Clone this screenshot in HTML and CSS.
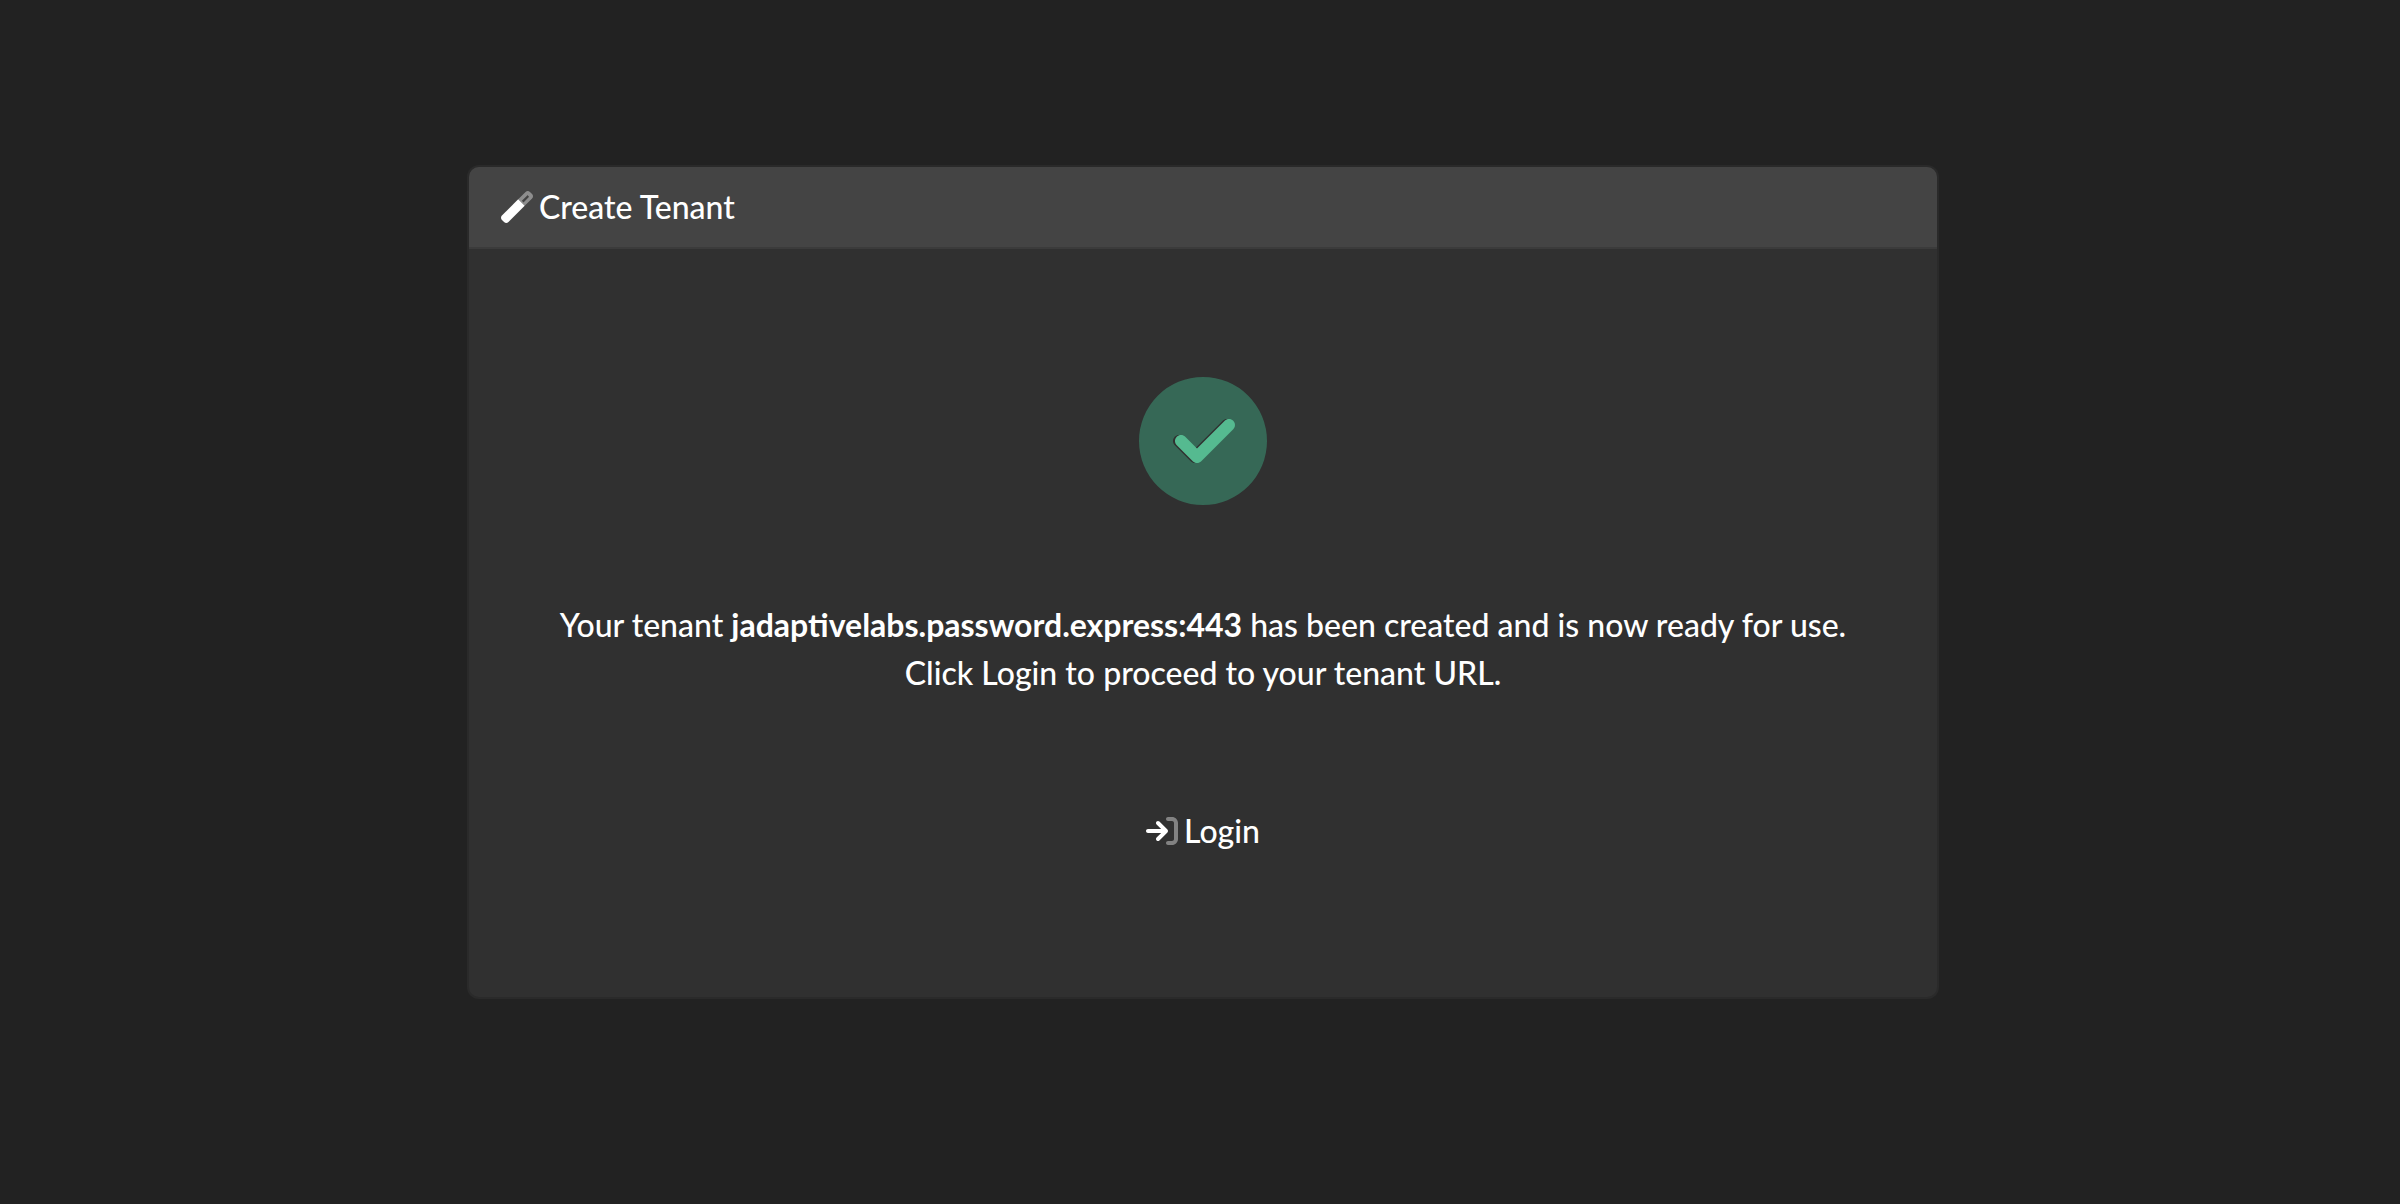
FILE: index.html
```html
<!DOCTYPE html>
<html lang="en">
  <head>
    <meta charset="UTF-8" />
    <meta name="viewport" content="width=device-width, initial-scale=1.0" />
    <title>Create Tenant</title>
    <link rel="stylesheet" href="styles.css">
  </head>
  <body>
    <main class="container">
      <div class="card">
        <div class="card-header">
          <svg class="icon" viewBox="0 0 512 512" aria-hidden="true">
            <path class="icon-secondary" fill-rule="evenodd" d="M275 133L393 15c20-20 50-20 70 0l34 34c20 20 20 50 0 70L379 237zM334 156l26 26 82-82c6-6 6-12 0-18l-8-8c-6-6-12-6-18 0z" />
            <path d="M275 133L15 393c-20 20-20 50 0 70l34 34c20 20 50 20 70 0l260-260z" />
          </svg>
          <span>Create Tenant</span>
        </div>
        <div class="card-body">
          <svg class="icon-success" viewBox="0 0 512 512" aria-hidden="true">
            <path class="success-circle" fill-rule="evenodd" d="M256 512A256 256 0 1 0 256 0a256 256 0 1 0 0 512zM369 209L241 337c-9.4 9.4-24.6 9.4-33.9 0l-64-64c-9.4-9.4-9.4-24.6 0-33.9s24.6-9.4 33.9 0l47 47L335 175c9.4-9.4 24.6-9.4 33.9 0s9.4 24.6 0 33.9z" />
            <path class="success-check" d="M377 209L249 337c-9.4 9.4-24.6 9.4-33.9 0l-64-64c-9.4-9.4-9.4-24.6 0-33.9s24.6-9.4 33.9 0l47 47L343 175c9.4-9.4 24.6-9.4 33.9 0s9.4 24.6 0 33.9z" />
          </svg>
          <p class="message">
            Your tenant <strong>jadaptivelabs.password.express:443</strong> has been created and is now ready for use.<br />
            Click Login to proceed to your tenant URL.
          </p>
          <a class="login" href="/login">
            <svg class="icon" viewBox="0 0 512 512" aria-hidden="true">
              <path class="icon-secondary" d="M352 32c-17.700 0-32 14.300-32 32s14.300 32 32 32h64c17.700 0 32 14.300 32 32v256c0 17.700-14.300 32-32 32h-64c-17.700 0-32 14.300-32 32s14.300 32 32 32h64c53 0 96-43 96-96V128c0-53-43-96-96-96z" />
              <path d="M342.600 233.400c12.500 12.500 12.500 32.800 0 45.300l-128 128c-12.500 12.500-32.800 12.500-45.300 0s-12.500-32.800 0-45.300L242.700 288H32c-17.700 0-32-14.300-32-32s14.300-32 32-32h210.700l-73.400-73.400c-12.500-12.500-12.500-32.800 0-45.300s32.800-12.500 45.300 0z" />
            </svg>
            <span>Login</span>
          </a>
        </div>
      </div>
    </main>
  </body>
</html>
```

FILE: styles.css
```css
* {
  box-sizing: border-box;
}

body {
  margin: 0;
  font-family: Lato, sans-serif;
  font-size: 32px;
  font-weight: 500;
  line-height: 48px;
  color: #fff;
  background-color: #222;
}

strong {
  font-weight: 700;
}

.container {
  padding: 165px 461px 165px 467px;
}

.card {
  background-color: #303030;
  border: 2px solid rgba(0, 0, 0, 0.125);
  border-radius: 12px;
}

.card-header {
  display: flex;
  align-items: center;
  gap: 6px;
  padding: 16px 32px;
  background-color: #444;
  border-bottom: 2px solid rgba(0, 0, 0, 0.125);
  border-radius: 10px 10px 0 0;
}

.card-body {
  display: flex;
  flex-direction: column;
  align-items: center;
  padding: 128px 32px 142px;
  text-align: center;
}

.icon {
  width: 32px;
  height: 32px;
  fill: #fff;
}

.icon-secondary {
  opacity: 0.4;
}

.icon-success {
  width: 128px;
  height: 128px;
}

.success-circle {
  fill: #366856;
}

.success-check {
  fill: #55ba90;
}

.message {
  margin: 96px 0 110px;
}

.login {
  display: flex;
  align-items: center;
  gap: 6px;
  color: #fff;
  text-decoration: none;
}
```
